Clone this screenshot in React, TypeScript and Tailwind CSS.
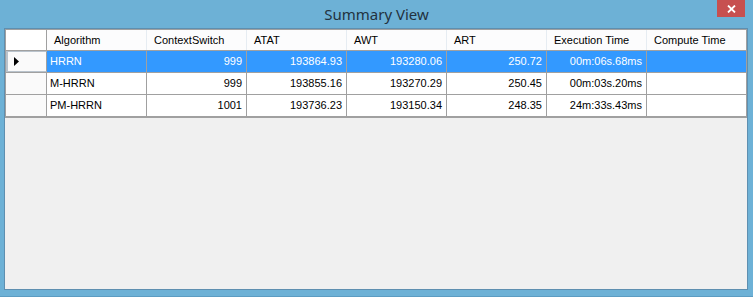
import React from "react";

const cols = ["Algorithm", "ContextSwitch", "ATAT", "AWT", "ART", "Execution Time", "Compute Time"];
const rows = [
  ["HRRN", "999", "193864.93", "193280.06", "250.72", "00m:06s.68ms", ""],
  ["M-HRRN", "999", "193855.16", "193270.29", "250.45", "00m:03s.20ms", ""],
  ["PM-HRRN", "1001", "193736.23", "193150.34", "248.35", "24m:33s.43ms", ""],
];

export default function App() {
  return (
    <div className="w-[753px] h-[297px] bg-[#6DB1D6] flex flex-col border-b border-[#5C9CC2] overflow-hidden">
      <div className="relative h-[28px] flex items-center justify-center shrink-0">
        <span className="text-[15px] text-[#23323f] leading-none pt-[1px]" style={{ fontFamily: '"Noto Sans", "Open Sans", sans-serif' }}>
          Summary View
        </span>
        <div className="absolute left-[717px] top-0 w-[28px] h-[17px] bg-[#C75050] flex items-center justify-center">
          <svg width="9" height="8" viewBox="0 0 9 8">
            <path d="M1 0.5 L8 7.5 M8 0.5 L1 7.5" stroke="white" strokeWidth="1.8" />
          </svg>
        </div>
      </div>
      <div className="ml-[4px] w-[744px] h-[262px] border border-[#5E8FB0] bg-[#F0F0F0] shrink-0">
        <div
          className="w-[742px] border border-[#A0A0A0] border-r-0 bg-white text-[11px] text-black"
          style={{ fontFamily: '"Liberation Sans", Arial, sans-serif' }}
        >
          <div className="flex h-[21px] border-b border-[#A0A0A0] bg-[#FCFCFD]">
            <div className="w-[41px] border-r border-[#A0A0A0] bg-white" />
            {cols.map((c, i) => (
              <div
                key={c}
                className={`w-[100px] flex items-center pl-[7px] border-r ${i === cols.length - 1 ? "border-[#A0A0A0]" : "border-[#E6ECF2]"}`}
              >
                {c}
              </div>
            ))}
          </div>
          {rows.map((r, ri) => {
            const sel = ri === 0;
            return (
              <div key={ri} className="flex h-[22px] border-b border-[#A0A0A0]">
                <div className={`w-[41px] border-r border-[#A0A0A0] bg-[#FAFAFA] flex items-center ${sel ? "border-l-[2px] border-t border-b border-l-[#B9C3CC] border-t-[#B9C3CC] border-b-[#B9C3CC]" : ""}`}>
                  {sel && (
                    <svg width="5" height="9" viewBox="0 0 5 9" className="ml-[6px]">
                      <path d="M0 0 L5 4.5 L0 9 Z" fill="black" />
                    </svg>
                  )}
                </div>
                {r.map((v, ci) => (
                  <div
                    key={ci}
                    className={`w-[100px] flex items-center border-r border-[#A0A0A0] ${ci === 0 ? "justify-start pl-[3px]" : "justify-end pr-[4px]"} ${sel ? "bg-[#3399FF] text-white" : "bg-white"}`}
                  >
                    {v}
                  </div>
                ))}
              </div>
            );
          })}
        </div>
      </div>
    </div>
  );
}
